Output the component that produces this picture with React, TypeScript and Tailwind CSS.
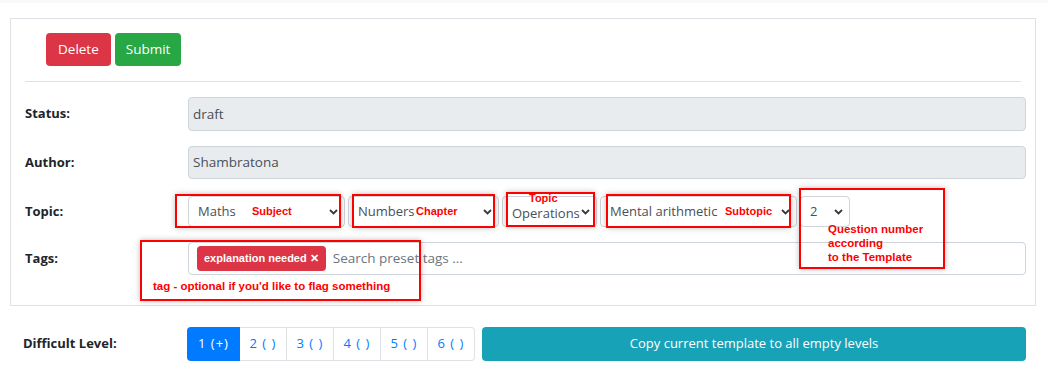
import { ReactNode } from "react";

function Chevron() {
  return (
    <svg width="9" height="6" viewBox="0 0 9 6" className="shrink-0">
      <path d="M1 1l3.5 3.5L8 1" fill="none" stroke="#343a40" strokeWidth="1.8" />
    </svg>
  );
}

function Select({ value, width, textClass = "" }: { value: string; width: string; textClass?: string }) {
  return (
    <div
      className={`${width} h-[31px] flex items-center justify-between pl-[9px] pr-[6px] border border-[#ced4da] rounded-[4px] bg-white text-[#495057] text-[13px]`}
    >
      <span className={`leading-none ${textClass}`}>{value}</span>
      <Chevron />
    </div>
  );
}

function Row({ label, children, className }: { label: string; children: ReactNode; className: string }) {
  return (
    <div className={`flex items-center ${className}`}>
      <div className="w-[163px] shrink-0 text-[13px] font-bold text-[#212529]">{label}</div>
      {children}
    </div>
  );
}

// red annotation boxes drawn over the form
function Note({ className, children }: { className: string; children?: ReactNode }) {
  return (
    <div
      className={`absolute border-2 border-[#ff0000] shadow-[0_0_6px_rgba(0,0,0,0.25)] font-['Liberation_Sans',Arial,sans-serif] font-bold text-[#ff0000] ${className}`}
    >
      {children}
    </div>
  );
}

export default function App() {
  const levels = ["1 (+)", "2 ( )", "3 ( )", "4 ( )", "5 ( )", "6 ( )"];
  return (
    <div className="relative w-[1048px] h-[369px] bg-white font-['Segoe_UI','Open_Sans',sans-serif] overflow-hidden">
      <div className="h-[3px] bg-[#f8f9fa]" />

      <div className="ml-[10px] mt-[15px] w-[1026px] h-[288px] border border-[#dee2e6] pl-[14px] pr-[9px]">
        <div className="flex gap-[4px] pl-[21px] pt-[14px]">
          <button className="h-[33px] px-[12px] rounded-[4px] bg-[#dc3545] text-white text-[13.5px]">Delete</button>
          <button className="h-[33px] px-[11px] rounded-[4px] bg-[#28a745] text-white text-[13.5px]">Submit</button>
        </div>
        <div className="mt-[15px] mr-[5px] border-t border-[#dee2e6]" />

        <Row label="Status:" className="mt-[15px]">
          <div className="flex-1 h-[34px] flex items-center px-[4px] border border-[#ced4da] rounded-[4px] bg-[#e9ecef] text-[13.5px] text-[#495057]">
            draft
          </div>
        </Row>
        <Row label="Author:" className="mt-[15px]">
          <div className="flex-1 h-[33px] flex items-center px-[4px] border border-[#ced4da] rounded-[4px] bg-[#e9ecef] text-[13.5px] text-[#495057]">
            Shambratona
          </div>
        </Row>
        <Row label="Topic:" className="mt-[17px]">
          <div className="flex gap-[3px]">
            <Select value="Maths" width="w-[157px]" />
            <Select value="Numbers" width="w-[151px]" />
            <Select value="Operations" width="w-[95px]" textClass="pt-[3px]" />
            <Select value="Mental arithmetic" width="w-[197px]" />
            <Select value="2" width="w-[50px]" />
          </div>
        </Row>
        <Row label="Tags:" className="mt-[15px]">
          <div className="flex-1 h-[33px] flex items-center gap-[7px] pl-[8px] border border-[#ced4da] rounded-[4px] bg-white">
            <span className="h-[25px] flex items-center px-[7px] rounded-[4px] bg-[#dc3545] text-white text-[11px] font-bold font-['Liberation_Sans',Arial,sans-serif]">
              explanation needed ✕
            </span>
            <span className="text-[13.5px] text-[#6c757d]">Search preset tags ...</span>
          </div>
        </Row>
      </div>

      <div className="flex items-center mt-[21px] pl-[23px]">
        <div className="w-[164px] text-[13px] font-bold text-[#212529]">Difficult Level:</div>
        <div className="flex">
          {levels.map((l, i) => (
            <div
              key={l}
              className={
                i === 0
                  ? "w-[53px] h-[34px] flex items-center justify-center rounded-l-[4px] bg-[#007bff] text-white text-[13px] tracking-[1px]"
                  : `w-[47px] h-[34px] flex items-center justify-center border border-l-0 border-[#dee2e6] text-[#007bff] text-[13px] tracking-[1px] ${i === 5 ? "rounded-r-[4px]" : ""}`
              }
            >
              {l}
            </div>
          ))}
        </div>
        <button className="ml-[7px] w-[544px] h-[34px] rounded-[4px] bg-[#17a2b8] text-white text-[13px]">
          Copy current template to all empty levels
        </button>
      </div>

      <Note className="left-[175px] top-[194px] w-[166px] h-[34px] pl-[75px] pt-[8px] text-[11px] leading-[14px]">Subject</Note>
      <Note className="left-[352px] top-[194px] w-[143px] h-[34px] pl-[62px] pt-[8px] text-[11px] leading-[14px]">Chapter</Note>
      <Note className="left-[506px] top-[192px] w-[89px] h-[35px] pl-[21px] pt-0 text-[11px] leading-[9px]">Topic</Note>
      <Note className="left-[606px] top-[194px] w-[185px] h-[34px] pl-[117px] pt-[8px] text-[11px] leading-[14px]">Subtopic</Note>
      <Note className="left-[799px] top-[188px] w-[146px] h-[81px] pl-[27px] pt-[32px] text-[11.5px] leading-[14px]">
        Question number
        <br />
        according
        <br />
        to the Template
      </Note>
      <Note className="left-[140px] top-[240px] w-[281px] h-[61px] pl-[11px] pt-[37px] text-[11.5px] leading-[14px]">
        tag - optional if you'd like to flag something
      </Note>
    </div>
  );
}
